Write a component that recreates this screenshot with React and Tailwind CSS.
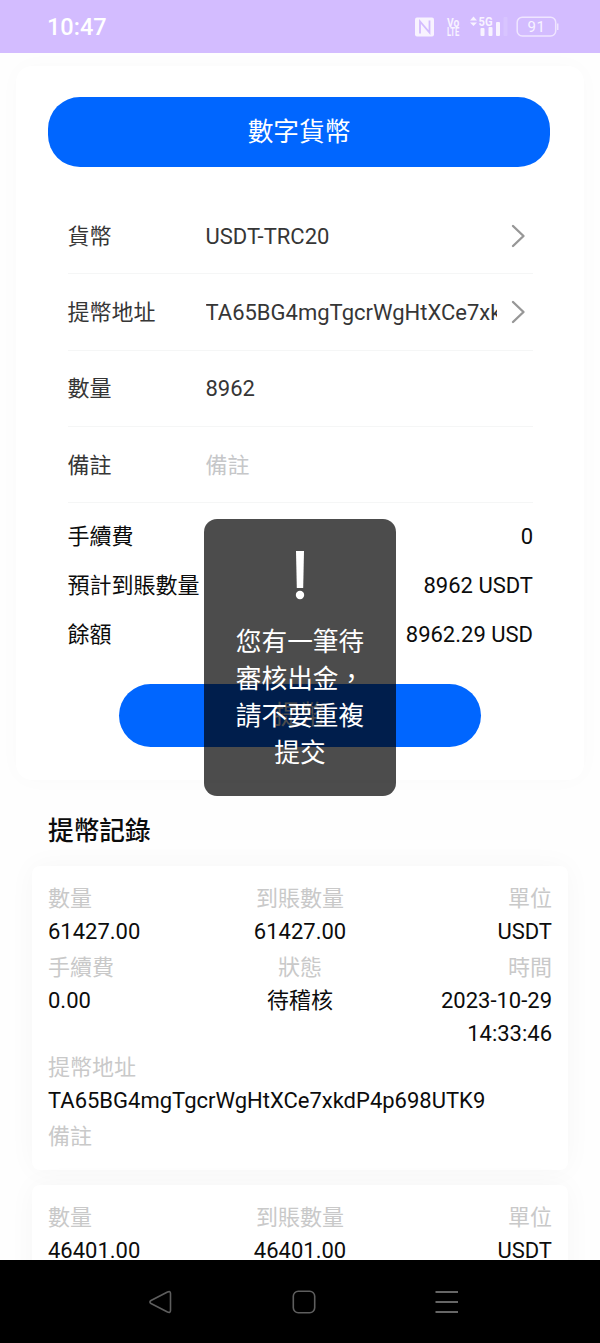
function Status() {
  return (
    <div className="flex h-[53px] shrink-0 items-center justify-between bg-[#d3bcff] pl-[47px] pr-[40px]">
      <span className="pt-[1px] text-[23.5px] font-medium leading-[30px] text-white">10:47</span>
      <svg width="146" height="30" viewBox="414 12 146 30" fill="none">
        <rect x="415" y="17.500" width="19" height="19" rx="2" fill="#f8f3ff" />
        <path d="M420 33.500V21.500l9.500 11V20.500" stroke="#d3bcff" strokeWidth="1.800" />
        <g fill="#f8f3ff" fontFamily="Roboto, sans-serif" fontWeight="700">
          <text transform="translate(447 26.800) scale(.82 1)" fontSize="12.500">Vo</text>
          <text transform="translate(447 36) scale(.64 1)" fontSize="12">LTE</text>
          <text transform="translate(478.500 25.800) scale(.86 1)" fontSize="13">5G</text>
          <path d="M470 20.500h7l-3.500-4zM470 22.500h7l-3.500 3.500z" />
          <rect x="480.500" y="28" width="4" height="8" rx="1" />
          <rect x="488.500" y="27" width="4" height="9" rx="1" />
          <rect x="496" y="22" width="4" height="14" rx="1" />
        </g>
        <rect x="503.500" y="17" width="4" height="19" rx="1" fill="#fff" opacity=".13" />
        <rect x="517.200" y="17.200" width="38.500" height="18.800" rx="5" stroke="#efe5ff" strokeWidth="1.500" />
        <path d="M557.700 23.500v6.500" stroke="#efe5ff" strokeWidth="1.500" />
        <text x="527.500" y="32" fontSize="15" fill="#f8f3ff" fontFamily="Roboto, sans-serif" textLength="17.500">91</text>
      </svg>
    </div>
  );
}

function Row({ label, value, arrow, muted }) {
  return (
    <div className="flex h-[76.3px] items-center border-b-[1.5px] border-[#f5f6f6] text-[#363636]">
      <span className="w-[138px] shrink-0 pt-px">{label}</span>
      <span className={muted ? "w-[291px] pt-px text-[#c6c7c9]" : "w-[291px] overflow-hidden whitespace-nowrap pt-px"}>{value}</span>
      {arrow && (
        <svg className="ml-[14px] shrink-0" width="16" height="24" viewBox="0 0 16 24" fill="none">
          <path d="M2 2l10.500 10L2 22" stroke="#979797" strokeWidth="2.400" strokeLinecap="round" strokeLinejoin="round" />
        </svg>
      )}
    </div>
  );
}

function Fee({ label, value }) {
  return (
    <div className="flex h-[49px] items-center justify-between">
      <span>{label}</span>
      <span>{value}</span>
    </div>
  );
}

function Cell({ label, value, className }) {
  return (
    <div className={className}>
      <div className="text-[#c9c9c9]">{label}</div>
      <div>{value}</div>
    </div>
  );
}

function Record({ amount }) {
  return (
    <section className="h-[304px] shrink-0 rounded-[8px] bg-white px-[16px] pt-[16px] leading-[33px] shadow-[0_0_28px_rgba(0,0,0,0.035)]">
      <div className="grid grid-cols-3 gap-y-[3px]">
        <Cell label="數量" value={amount} />
        <Cell label="到賬數量" value={amount} className="text-center" />
        <Cell label="單位" value="USDT" className="text-right" />
        <Cell label="手續費" value="0.00" />
        <Cell label="狀態" value="待稽核" className="text-center" />
        <Cell label="時間" value="2023-10-29 14:33:46" className="text-right" />
      </div>
      <Cell label="提幣地址" value="TA65BG4mgTgcrWgHtXCe7xkdP4p698UTK9" className="pt-[0.6px]" />
      <div className="mt-[3px] text-[#c9c9c9]">備註</div>
    </section>
  );
}

function NavBar() {
  return (
    <nav className="flex h-[83px] shrink-0 items-center justify-between bg-black pl-[148px] pr-[140px]">
      <svg width="25" height="26" viewBox="0 0 25 26" fill="none" stroke="#5e5e5e" strokeWidth="1.600" strokeLinejoin="round">
        <path d="M3 11.500L19.500 3Q22.500 1.800 22.500 4.500V21.500Q22.500 24.200 19.500 23L3 14.500Q.8 13 3 11.500z" />
      </svg>
      <svg width="26" height="26" viewBox="0 0 26 26" fill="none" stroke="#5e5e5e" strokeWidth="1.600">
        <rect x="2.300" y="2.300" width="21.400" height="21.400" rx="5" />
      </svg>
      <svg width="26" height="26" viewBox="0 0 26 26" stroke="#666" strokeWidth="1.800">
        <path d="M1.500 3h22.500M1.500 13h22.500M1.500 23h22.500" />
      </svg>
    </nav>
  );
}

export default function App() {
  return (
    <div className="relative flex h-[1343px] w-[600px] flex-col overflow-hidden bg-[#fefefe] font-['Roboto','Noto_Sans_CJK_TC',sans-serif] text-[22px] leading-[33px] text-[#0c0c0c]">
      <Status />
      <main className="flex min-h-0 flex-1 flex-col overflow-hidden">
        <section className="mx-[16px] mt-[13px] flex h-[714px] shrink-0 flex-col rounded-[16px] bg-white px-[32px] pt-[31px] shadow-[0_0_24px_rgba(0,0,0,0.02)]">
          <button className="h-[70px] w-[502px] shrink-0 rounded-[32px] bg-[#0066ff] text-[25.7px] text-white">數字貨幣</button>
          <div className="ml-[19.5px] mt-[31px] w-[465.5px]">
            <Row label="貨幣" value="USDT-TRC20" arrow />
            <Row label="提幣地址" value="TA65BG4mgTgcrWgHtXCe7xkdP4p698UTK9" arrow />
            <Row label="數量" value="8962" />
            <Row label="備註" value="備註" muted />
            <div className="pt-[9px]">
              <Fee label="手續費" value="0" />
              <Fee label="預計到賬數量" value="8962 USDT" />
              <Fee label="餘額" value="8962.29 USD" />
            </div>
          </div>
          <button className="mt-[25px] h-[63px] w-[362px] shrink-0 self-center rounded-full bg-[#0066ff] text-[25.7px] text-white">提幣</button>
        </section>
        <h2 className="ml-[48px] mt-[32px] h-[38px] shrink-0 text-[25.7px] font-medium leading-[38px]">提幣記錄</h2>
        <div className="mx-[32px] mt-[16px] flex flex-col gap-[15px]">
          <Record amount="61427.00" />
          <Record amount="46401.00" />
        </div>
      </main>
      <NavBar />
      <div className="absolute left-[204px] top-[518.5px] flex h-[277px] w-[192px] flex-col items-center rounded-[13px] bg-black/70 px-[26px] pt-[31px] text-center text-[25.7px] leading-[37.2px] text-white">
        <svg className="mb-[24px] shrink-0" width="12" height="50" viewBox="0 0 12 50" fill="white">
          <path d="M2 1h8l-.8 37H2.800z" />
          <circle cx="6" cy="45" r="4.200" />
        </svg>
        <p className="w-[130px]">您有一筆待審核出金，請不要重複提交</p>
      </div>
    </div>
  );
}
